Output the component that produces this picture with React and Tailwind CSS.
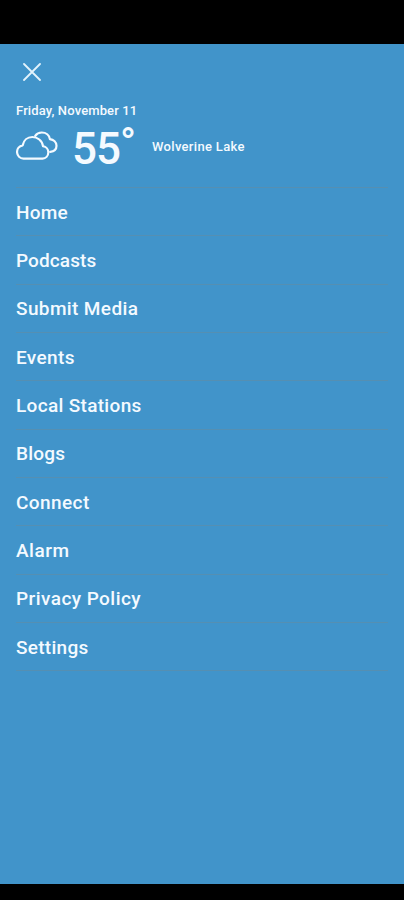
const menuItems = [
  { label: "Home", spacing: "tracking-[0.2px]" },
  { label: "Podcasts", spacing: "tracking-[0.1px]" },
  { label: "Submit Media", spacing: "tracking-[0.38px]" },
  { label: "Events", spacing: "tracking-[0.35px]" },
  { label: "Local Stations", spacing: "tracking-[0.32px]" },
  { label: "Blogs", spacing: "tracking-[0.2px]" },
  { label: "Connect", spacing: "tracking-[0.42px]" },
  { label: "Alarm", spacing: "tracking-[0.5px]" },
  { label: "Privacy Policy", spacing: "tracking-[0.44px]" },
  { label: "Settings", spacing: "tracking-[0.28px]" },
];

function CloseIcon() {
  return (
    <svg width="18" height="18" viewBox="0 0 18 18" fill="none" stroke="#e3f3fc" strokeWidth="1.8" strokeLinecap="round">
      <path d="M1 1l16 16M17 1L1 17" />
    </svg>
  );
}

function CloudsIcon() {
  return (
    <svg width="42" height="30" viewBox="0 0 42 30" fill="none" stroke="#f4faff" strokeWidth="2.2" strokeLinejoin="round" strokeLinecap="round">
      <path d="M7.500 27.700h19a6.300 6.300 0 0 0 .5-12.500C26.300 9.600 21.400 6 16.300 6c-4.800 0-8.700 3.200-9.600 8.300A6.750 6.750 0 0 0 7.500 27.700z" />
      <path d="M19.200 4.800C20.600 2.800 23.100 1.500 25.800 1.500c4.200 0 7.500 2.800 8.100 6.600 3.700.5 6.600 3.100 6.600 6.600 0 3.400-2.500 5.700-6.300 6.100" />
    </svg>
  );
}

export default function App() {
  return (
    <div className="flex h-[900px] w-[404px] flex-col overflow-hidden bg-black font-['Roboto',sans-serif] text-[#f4faff]">
      <div className="h-11 shrink-0" />

      <div className="h-[840px] shrink-0 bg-[#4194ca] px-4">
        {/* Date and weather */}
        <header className="flex h-[144px] flex-col border-b border-[#558fb2]">
          <button className="ml-[7px] mt-[19px] block w-[18px]" aria-label="Close menu">
            <CloseIcon />
          </button>

          <p className="mt-[22px] h-4 text-[13px] font-medium leading-4 tracking-[0.13px]">
            Friday, November 11
          </p>

          <div className="mt-[3px] flex h-16 items-start">
            <div className="mt-[9px] w-[56px]">
              <CloudsIcon />
            </div>
            <span className="mt-[5px] w-[48px] text-[44px] font-medium leading-[44px] tracking-[-1px]">55</span>
            <span className="mt-[1px] w-[32px] text-[42px] font-medium leading-[42px]">°</span>
            <span className="mt-[17px] whitespace-nowrap text-[13px] font-medium leading-4 tracking-[0.32px]">Wolverine Lake</span>
          </div>
        </header>

        {/* Menu */}
        <nav>
          {menuItems.map((item) => (
            <a key={item.label} className="flex h-[48.35px] items-center border-b border-[#558fb2] pt-0.5">
              <span className={"text-[19px] font-medium leading-6 " + item.spacing}>{item.label}</span>
            </a>
          ))}
        </nav>
      </div>

      <div className="h-4 shrink-0" />
    </div>
  );
}
